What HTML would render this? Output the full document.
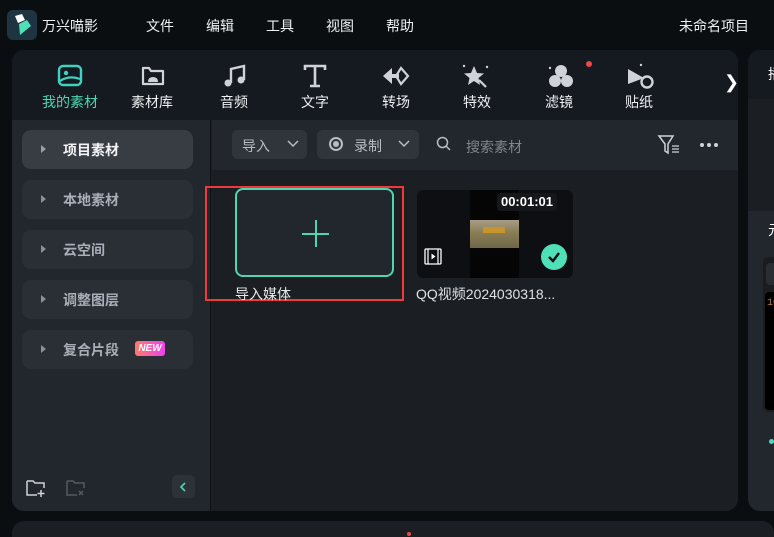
<!DOCTYPE html>
<html><head><meta charset="utf-8"><style>
*{margin:0;padding:0;box-sizing:border-box}
html{width:774px;height:537px;overflow:hidden}
body{width:774px;height:537px;background:#0b0e11;overflow:hidden;position:relative;font-family:"Liberation Sans","Noto Sans CJK SC",sans-serif;color:#e6e8ea}
.a{position:absolute}
.menu{top:16px;font-size:14px;color:#eef0f2}
.tab{top:92px;font-size:14px;color:#eef0f2;text-align:left;width:70px}
.side{left:22px;width:171px;height:39px;border-radius:9px;background:#2a2e35;font-size:14px;color:#a9afb8;font-weight:bold}
.side .t{position:absolute;left:41px;top:10px}
.side .tri{position:absolute;left:19px;top:15px;width:0;height:0;border-left:5px solid #8b9199;border-top:4px solid transparent;border-bottom:4px solid transparent}
</style></head><body>
<div class="a" style="left:7px;top:10px;width:30px;height:30px;border-radius:6px;background:#1e3440"></div>
<svg class="a" style="left:11px;top:12px" width="22" height="26"><path d="M4 4 L11 2 L14 8 L7 11Z" fill="#fff"/><path d="M8 12 L16 8 L20 14 L9 23 Z" fill="#4fe0b8"/></svg>
<div class="a menu" style="left:42px">万兴喵影</div>
<div class="a menu" style="left:146px">文件</div>
<div class="a menu" style="left:206px">编辑</div>
<div class="a menu" style="left:266px">工具</div>
<div class="a menu" style="left:326px">视图</div>
<div class="a menu" style="left:386px">帮助</div>
<div class="a menu" style="left:679px">未命名项目</div>

<div class="a" style="left:12px;top:50px;width:726px;height:461px;border-radius:12px;background:#1b1e22;overflow:hidden">
 <div class="a" style="left:0;top:0;width:726px;height:70px;background:#141a20"></div>
 <div class="a" style="left:0;top:70px;width:199px;height:391px;background:#22272e;border-right:1px solid #0f1114"></div>
 <div class="a" style="left:200px;top:70px;width:526px;height:50px;background:#22272e"></div>
</div>
<svg class="a" style="left:57px;top:63px" width="28" height="26"><rect x="2" y="3" width="22" height="19" rx="4" fill="none" stroke="#3ed3c0" stroke-width="2.4"/><circle cx="9" cy="10" r="2.2" fill="#3ed3c0"/><path d="M3 18 Q12 12 23 16" stroke="#3ed3c0" stroke-width="2.2" fill="none"/></svg>
<svg class="a" style="left:140px;top:63px" width="26" height="26"><path d="M3 5 L9 5 L11 8 L23 8 L23 21 L3 21Z" fill="none" stroke="#cfd3d8" stroke-width="2.2" stroke-linejoin="round"/><path d="M8 19 Q8 14 13 14 Q18 14 18 19Z" fill="#cfd3d8"/></svg>
<svg class="a" style="left:222px;top:63px" width="26" height="26"><path d="M9 20 V6 L22 3 V17" stroke="#cfd3d8" stroke-width="2.4" fill="none"/><circle cx="6" cy="20" r="3.5" fill="#cfd3d8"/><circle cx="19" cy="17" r="3.5" fill="#cfd3d8"/></svg>
<svg class="a" style="left:302px;top:63px" width="26" height="26"><path d="M3 7 V3 H23 V7 M13 3 V23 M8 23 H18" stroke="#cfd3d8" stroke-width="2.6" fill="none"/></svg>
<svg class="a" style="left:381px;top:62px" width="32" height="28"><path d="M2 14 L11 6 V22Z" fill="#cfd3d8"/><path d="M11 12 H18 V16 H11" fill="#cfd3d8"/><path d="M20 6 L27 14 L20 22 L15 14Z" fill="none" stroke="#cfd3d8" stroke-width="2.2"/></svg>
<svg class="a" style="left:461px;top:62px" width="30" height="28"><path d="M13 4 L16 11 L23 11.5 L17.5 16 L19 23 L13 19 L7 23 L8.5 16 L3 11.5 L10 11Z" fill="#cfd3d8"/><path d="M18 18 L25 25" stroke="#cfd3d8" stroke-width="2.2"/><circle cx="3" cy="4" r="1.2" fill="#cfd3d8"/><circle cx="26" cy="5" r="1.2" fill="#cfd3d8"/></svg>
<svg class="a" style="left:545px;top:62px" width="30" height="28"><circle cx="16" cy="9" r="6" fill="#cfd3d8"/><circle cx="10" cy="19" r="6" fill="#cfd3d8"/><circle cx="22" cy="19" r="6" fill="#cfd3d8"/><circle cx="5" cy="6" r="1.2" fill="#cfd3d8"/></svg>
<div class="a" style="left:586px;top:61px;width:6px;height:6px;border-radius:3px;background:#f04848"></div>
<svg class="a" style="left:625px;top:62px" width="32" height="28"><path d="M3 7 L19 16 L3 22Z" fill="#cfd3d8"/><circle cx="22" cy="20" r="5.5" fill="none" stroke="#cfd3d8" stroke-width="2.4"/><circle cx="16" cy="3" r="1.2" fill="#cfd3d8"/></svg>
<div class="a" style="left:724px;top:72px;font-size:18px;color:#fff">❯</div>
<div class="a tab" style="left:42px;color:#4fd6b0">我的素材</div>
<div class="a tab" style="left:131px">素材库</div>
<div class="a tab" style="left:220px">音频</div>
<div class="a tab" style="left:301px">文字</div>
<div class="a tab" style="left:382px">转场</div>
<div class="a tab" style="left:463px">特效</div>
<div class="a tab" style="left:545px">滤镜</div>
<div class="a tab" style="left:625px">贴纸</div>

<div class="a side" style="top:130px;background:#383d44;color:#f3f4f6"><div class="tri" style="border-left-color:#9aa0a8"></div><div class="t">项目素材</div></div>
<div class="a side" style="top:180px"><div class="tri"></div><div class="t">本地素材</div></div>
<div class="a side" style="top:230px"><div class="tri"></div><div class="t">云空间</div></div>
<div class="a side" style="top:280px"><div class="tri"></div><div class="t">调整图层</div></div>
<div class="a side" style="top:330px"><div class="tri"></div><div class="t">复合片段</div>
 <div class="a" style="left:113px;top:11px;width:30px;height:15px;border-radius:3px;background:linear-gradient(90deg,#ff7a6a,#f040f0);font-size:10px;font-style:italic;color:#fff;text-align:center;line-height:15px">NEW</div></div>
<svg class="a" style="left:25px;top:478px" width="22" height="20"><path d="M2 3 H8 L10 5 H19 V10 M2 3 V17 H12" stroke="#cfd3d8" stroke-width="1.5" fill="none"/><path d="M16 12 V19 M12.5 15.5 H19.5" stroke="#cfd3d8" stroke-width="1.5"/></svg>
<svg class="a" style="left:65px;top:478px" width="22" height="20"><path d="M2 3 H8 L10 5 H19 V10 M2 3 V17 H12" stroke="#555a61" stroke-width="1.5" fill="none"/><path d="M14 13 L18 17 M18 13 L14 17" stroke="#555a61" stroke-width="1.5"/></svg>
<div class="a" style="left:172px;top:475px;width:23px;height:23px;border-radius:5px;background:#2c3238"></div>
<svg class="a" style="left:178px;top:481px" width="10" height="12"><path d="M7 2 L3 6 L7 10" stroke="#4fd6b0" stroke-width="1.6" fill="none"/></svg>

<div class="a" style="left:232px;top:130px;width:75px;height:29px;border-radius:6px;background:#30353c"></div>
<div class="a" style="left:242px;top:136px;font-size:14px;color:#b8bdc4">导入</div>
<svg class="a" style="left:287px;top:140px" width="12" height="8"><path d="M1 1 L6 6 L11 1" stroke="#b8bdc4" stroke-width="1.5" fill="none"/></svg>
<div class="a" style="left:317px;top:130px;width:102px;height:29px;border-radius:6px;background:#30353c"></div>
<div class="a" style="left:329px;top:137px;width:14px;height:14px;border-radius:7px;border:2px solid #b8bdc4"></div>
<div class="a" style="left:333px;top:141px;width:6px;height:6px;border-radius:3px;background:#b8bdc4"></div>
<div class="a" style="left:354px;top:136px;font-size:14px;color:#b8bdc4">录制</div>
<svg class="a" style="left:398px;top:140px" width="12" height="8"><path d="M1 1 L6 6 L11 1" stroke="#b8bdc4" stroke-width="1.5" fill="none"/></svg>
<svg class="a" style="left:436px;top:136px" width="16" height="16"><circle cx="6.5" cy="6.5" r="5" stroke="#b8bdc4" stroke-width="1.5" fill="none"/><path d="M10 10 L14 14" stroke="#b8bdc4" stroke-width="1.5"/></svg>
<div class="a" style="left:466px;top:137px;font-size:14px;color:#80868e">搜索素材</div>
<svg class="a" style="left:657px;top:134px" width="28" height="22"><path d="M2 2 H16 L11 10 V19 L8 17 V10Z" stroke="#cfd3d8" stroke-width="1.5" fill="none"/><path d="M15 12 H22 M15 15 H22 M15 18 H22" stroke="#cfd3d8" stroke-width="1.3"/></svg>
<div class="a" style="left:700px;top:143px;width:4px;height:4px;border-radius:2px;background:#cfd3d8;box-shadow:7px 0 #cfd3d8,14px 0 #cfd3d8"></div>

<div class="a" style="left:205px;top:186px;width:199px;height:115px;border:2px solid #f03a3a"></div>
<div class="a" style="left:235px;top:188px;width:159px;height:89px;border:2px solid #4fd6b0;border-radius:8px;background:#22272e"></div>
<div class="a" style="left:302px;top:233px;width:27px;height:2px;background:#4fd6b0"></div>
<div class="a" style="left:315px;top:220px;width:2px;height:27px;background:#4fd6b0"></div>
<div class="a" style="left:235px;top:284px;font-size:14px;color:#e6e8ea">导入媒体</div>

<div class="a" style="left:417px;top:190px;width:156px;height:88px;border-radius:6px;background:#0d0f12;overflow:hidden">
 <div class="a" style="left:53px;top:0;width:49px;height:88px;background:#050505"></div>
 <div class="a" style="left:53px;top:30px;width:49px;height:28px;background:linear-gradient(180deg,#a89d85,#8a7d55 45%,#6e6848)"></div>
 <div class="a" style="left:66px;top:37px;width:22px;height:6px;background:#c8942e"></div>
 <div class="a" style="left:80px;top:3px;width:60px;height:18px;border-radius:4px;background:#15181b;font-size:13px;font-weight:bold;color:#fff;text-align:center;line-height:18px">00:01:01</div>
</div>
<svg class="a" style="left:424px;top:248px" width="20" height="18"><rect x="1" y="1" width="16" height="15" rx="1" stroke="#fff" stroke-width="1.3" fill="none"/><path d="M4 1V16 M14 1V16" stroke="#fff" stroke-width="1.2"/><path d="M7.5 5.5 L11.5 8.5 L7.5 11.5Z" fill="#fff"/></svg>
<div class="a" style="left:541px;top:244px;width:26px;height:26px;border-radius:13px;background:#4fe0b8"></div>
<svg class="a" style="left:547px;top:250px" width="14" height="14"><path d="M2 7 L6 11 L12 3" stroke="#0d0f12" stroke-width="2.5" fill="none"/></svg>
<div class="a" style="left:416px;top:284px;font-size:14px;color:#dde0e4">QQ视频2024030318...</div>

<div class="a" style="left:748px;top:50px;width:40px;height:461px;border-radius:12px;background:#22272e;overflow:hidden">
 <div class="a" style="left:0;top:0;width:40px;height:49px;background:#141a20"></div>
 <div class="a" style="left:0;top:49px;width:40px;height:112px;background:#1b1e22"></div>
 <div class="a" style="left:20px;top:14px;font-size:14px;color:#fff">播</div>
 <div class="a" style="left:20px;top:170px;font-size:14px;color:#fff">元</div>
 <div class="a" style="left:15px;top:207px;width:30px;height:155px;border-radius:5px;background:#1a1c1f"></div>
 <div class="a" style="left:18px;top:213px;width:30px;height:22px;border-radius:4px;background:#2a2e33"></div>
 <div class="a" style="left:17px;top:242px;width:30px;height:118px;border-radius:4px;background:#000"></div>
 <div class="a" style="left:19px;top:248px;font-size:10px;color:#b08040;font-family:'Liberation Mono',monospace">10</div>
 <div class="a" style="left:21px;top:389px;width:5px;height:5px;border-radius:3px;background:#4fd6c0"></div>
</div>
<div class="a" style="left:12px;top:521px;width:762px;height:16px;border-radius:12px 12px 0 0;background:#1b1e22"></div>
<div class="a" style="left:407px;top:532px;width:4px;height:4px;border-radius:2px;background:#f04848"></div>
</body></html>
